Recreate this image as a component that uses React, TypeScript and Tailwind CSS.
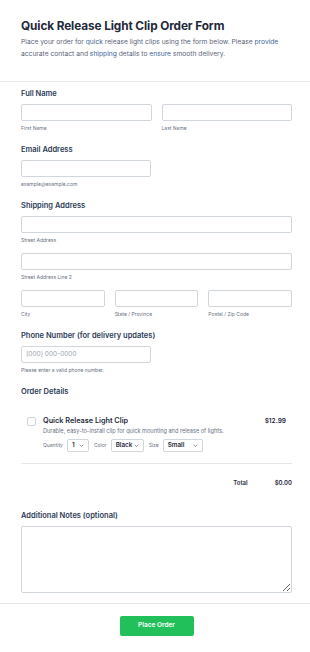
import React from 'react';

function SubLabel({ children }: { children: React.ReactNode }) {
  return <p className="mt-[4px] text-[5px] leading-[7px] text-gray-500">{children}</p>;
}

function Label({ children }: { children: React.ReactNode }) {
  return <p className="text-[7.5px] leading-[10px] font-semibold text-[#2b3a55]">{children}</p>;
}

function Field({ className = '' }: { className?: string }) {
  return <div className={`h-[17px] rounded-[2px] border border-gray-300 bg-white ${className}`} />;
}

function Chevron() {
  return (
    <svg className="w-[5px] h-[5px] text-gray-500" fill="none" stroke="currentColor" viewBox="0 0 10 10">
      <path strokeWidth={1.5} strokeLinecap="round" strokeLinejoin="round" d="M2 4l3 3 3-3" />
    </svg>
  );
}

function Select({ value, width }: { value: string; width: string }) {
  return (
    <div className={`flex items-center justify-between h-[13px] pl-[4px] pr-[4px] rounded-[2px] border border-gray-300 bg-white ${width}`}>
      <span className="text-[6.3px] font-semibold text-gray-800">{value}</span>
      <Chevron />
    </div>
  );
}

export default function App() {
  const hl = 'text-[#3b5f9a]';
  return (
    <div className="w-[310px] min-h-[652px] bg-white" style={{ fontFamily: 'Inter, "Noto Sans", sans-serif' }}>
      <div className="pl-[21px] pr-[18px] pt-[17px] pb-[21px] border-b border-gray-200">
        <h1 className="text-[11.8px] leading-[18px] font-bold tracking-[-0.1px] text-[#1f2a3c]">
          Quick Release Light Clip Order Form
        </h1>
        <p className="mt-[1px] text-[6.7px] leading-[12px] text-[#5b6478]">
          Place your order for <span className={hl}>quick</span> release light clips using the form below. Please{' '}
          <span className={hl}>provide</span> accurate contact and <span className={hl}>shipping</span> details to{' '}
          <span className={hl}>ensure</span> smooth delivery.
        </p>
      </div>

      <div className="pl-[21px] pr-[18px] pt-[7px] pb-[10px] border-b border-gray-200">
        <Label>Full Name</Label>
        <div className="mt-[5px] grid grid-cols-2 gap-[10px]">
          <div>
            <Field />
            <SubLabel>First Name</SubLabel>
          </div>
          <div>
            <Field />
            <SubLabel>Last Name</SubLabel>
          </div>
        </div>

        <div className="mt-[13px]">
          <Label>Email Address</Label>
          <Field className="mt-[5px] w-[130px]" />
          <SubLabel>example@example.com</SubLabel>
        </div>

        <div className="mt-[13px]">
          <Label>Shipping Address</Label>
          <Field className="mt-[5px]" />
          <SubLabel>Street Address</SubLabel>
          <Field className="mt-[9px]" />
          <SubLabel>Street Address Line 2</SubLabel>
          <div className="mt-[9px] grid grid-cols-3 gap-[10px]">
            <div>
              <Field />
              <SubLabel>City</SubLabel>
            </div>
            <div>
              <Field />
              <SubLabel>State / Province</SubLabel>
            </div>
            <div>
              <Field />
              <SubLabel>Postal / Zip Code</SubLabel>
            </div>
          </div>
        </div>

        <div className="mt-[13px]">
          <Label>Phone Number (for delivery updates)</Label>
          <div className="mt-[5px] w-[130px] h-[17px] rounded-[2px] border border-gray-300 flex items-center px-[4px]">
            <span className="text-[6.5px] text-gray-400">(000) 000-0000</span>
          </div>
          <SubLabel>Please enter a valid phone number.</SubLabel>
        </div>

        <div className="mt-[13px]">
          <Label>Order Details</Label>
          <div className="mt-[19px] pl-[6px] pb-[11px] border-b border-gray-200 flex gap-[7px]">
            <div className="mt-[1px] w-[9px] h-[9px] rounded-[2px] border border-gray-300 shrink-0" />
            <div className="flex-1">
              <div className="flex justify-between pr-[6px]">
                <span className="text-[7.3px] leading-[10px] font-semibold text-[#1f2a3c]">Quick Release Light Clip</span>
                <span className="text-[6.5px] leading-[10px] font-semibold text-[#1f2a3c]">$12.99</span>
              </div>
              <p className="mt-[1px] text-[5.6px] leading-[8px] text-gray-500">
                Durable, easy-to-install clip for quick mounting and release of lights.
              </p>
              <div className="mt-[4px] flex items-center">
                <span className="text-[5px] text-gray-500 mr-[4px]">Quantity</span>
                <Select value="1" width="w-[22px]" />
                <span className="text-[5px] text-gray-500 ml-[5px] mr-[4px]">Color</span>
                <Select value="Black" width="w-[33px]" />
                <span className="text-[5px] text-gray-500 ml-[5px] mr-[4px]">Size</span>
                <Select value="Small" width="w-[40px]" />
              </div>
            </div>
          </div>
          <div className="mt-[14px] flex justify-end text-[6px] font-semibold text-[#1f2a3c]">
            <span className="mr-[27px]">Total</span>
            <span>$0.00</span>
          </div>
        </div>

        <div className="mt-[24px]">
          <Label>Additional Notes (optional)</Label>
          <textarea className="mt-[5px] block w-full h-[67px] rounded-[2px] border border-gray-300 resize-y outline-none" />
        </div>
      </div>

      <div className="flex justify-center pl-[21px] pr-[18px] pt-[12px]">
        <button className="w-[74px] h-[20px] rounded-[2px] bg-[#22c05a] text-white text-[6.5px] font-semibold">
          Place Order
        </button>
      </div>
    </div>
  );
}
